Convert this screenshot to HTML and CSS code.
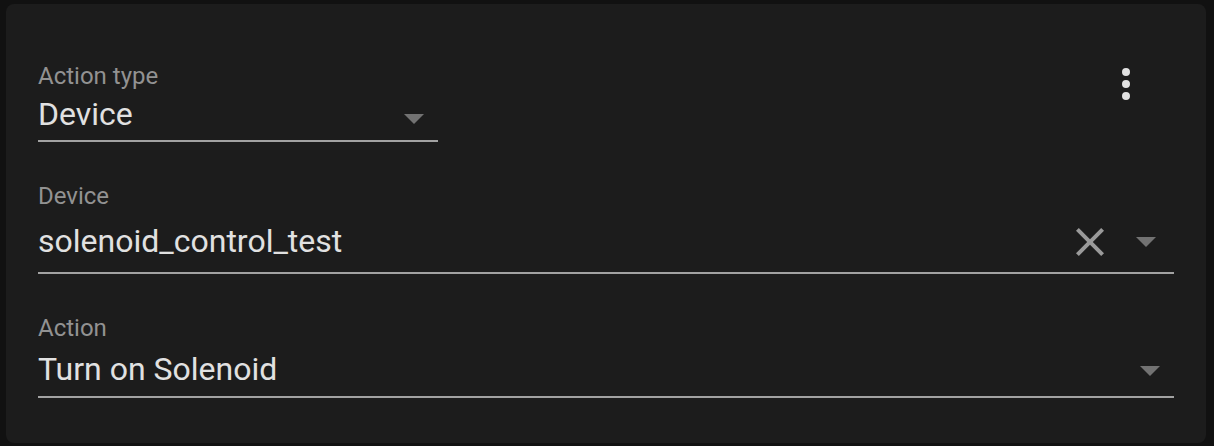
FILE: index.html
```html
<!DOCTYPE html>
<html lang="en">
<head>
<meta charset="utf-8">
<title>Action</title>
<link rel="stylesheet" href="styles.css">
</head>
<body>
<div class="card">
  <div class="top-row">
    <div class="field field--type">
      <div class="field-label">Action type</div>
      <div class="field-value">
        <span class="value-text">Device</span>
        <svg class="arrow arrow--type" width="20" height="10" viewBox="0 0 20 10"><polygon points="0,0 20,0 10,10"/></svg>
      </div>
    </div>
    <button class="menu-btn" aria-label="More">
      <svg width="48" height="48" viewBox="0 0 24 24"><path d="M12,16A2,2 0 0,1 14,18A2,2 0 0,1 12,20A2,2 0 0,1 10,18A2,2 0 0,1 12,16M12,10A2,2 0 0,1 14,12A2,2 0 0,1 12,14A2,2 0 0,1 10,12A2,2 0 0,1 12,10M12,4A2,2 0 0,1 14,6A2,2 0 0,1 12,8A2,2 0 0,1 10,6A2,2 0 0,1 12,4Z"/></svg>
    </button>
  </div>

  <div class="field field--device">
    <div class="field-label">Device</div>
    <div class="field-value">
      <span class="value-text">solenoid_control_test</span>
      <svg class="clear-icon" width="48" height="48" viewBox="0 0 24 24"><path d="M19,6.41L17.59,5L12,10.59L6.41,5L5,6.41L10.59,12L5,17.59L6.41,19L12,13.41L17.59,19L19,17.59L13.41,12L19,6.41Z"/></svg>
      <svg class="arrow arrow--device" width="20" height="10" viewBox="0 0 20 10"><polygon points="0,0 20,0 10,10"/></svg>
    </div>
  </div>

  <div class="field field--action">
    <div class="field-label">Action</div>
    <div class="field-value">
      <span class="value-text">Turn on Solenoid</span>
      <svg class="arrow arrow--action" width="20" height="10" viewBox="0 0 20 10"><polygon points="0,0 20,0 10,10"/></svg>
    </div>
  </div>
</div>
</body>
</html>
```

FILE: styles.css
```css
html, body {
  margin: 0;
  background: #111111;
}
body {
  padding: 4px 8px 3px 6px;
  font-family: Roboto, "Liberation Sans", sans-serif;
}
.card {
  box-sizing: border-box;
  width: 1200px;
  height: 439px;
  background: #1c1c1c;
  border-radius: 8px;
  padding: 58px 32px 45px 32px;
  display: flex;
  flex-direction: column;
  gap: 40px;
}
.top-row {
  display: flex;
  justify-content: space-between;
  align-items: flex-start;
}
.field {
  display: flex;
  flex-direction: column;
  border-bottom: 2px solid #a2a2a2;
}
.field-label {
  font-size: 24px;
  line-height: 28px;
  color: #929292;
}
.field-value {
  display: flex;
  align-items: center;
  height: 40px;
  font-size: 32px;
  line-height: 40px;
  color: #e1e1e1;
}
.value-text {
  flex: 1;
  white-space: nowrap;
}
.field--type {
  width: 400px;
  gap: 4px;
  padding-bottom: 6px;
}
.field--device {
  gap: 11px;
  padding-bottom: 11px;
}
.field--action {
  gap: 7px;
  padding-bottom: 7px;
}
.arrow {
  fill: #727272;
  flex: none;
}
.arrow--type {
  margin: 9px 14px 0 0;
}
.arrow--device {
  margin: 2px 18px 0 22px;
}
.arrow--action {
  margin: 4px 14px 0 0;
}
.clear-icon {
  fill: #9a9a9a;
  flex: none;
  margin-top: 2px;
}
.menu-btn {
  background: none;
  border: 0;
  padding: 0;
  margin: -2px 24px 0 0;
  width: 48px;
  height: 48px;
  fill: #e1e1e1;
  cursor: pointer;
}
.menu-btn svg {
  display: block;
}
```
